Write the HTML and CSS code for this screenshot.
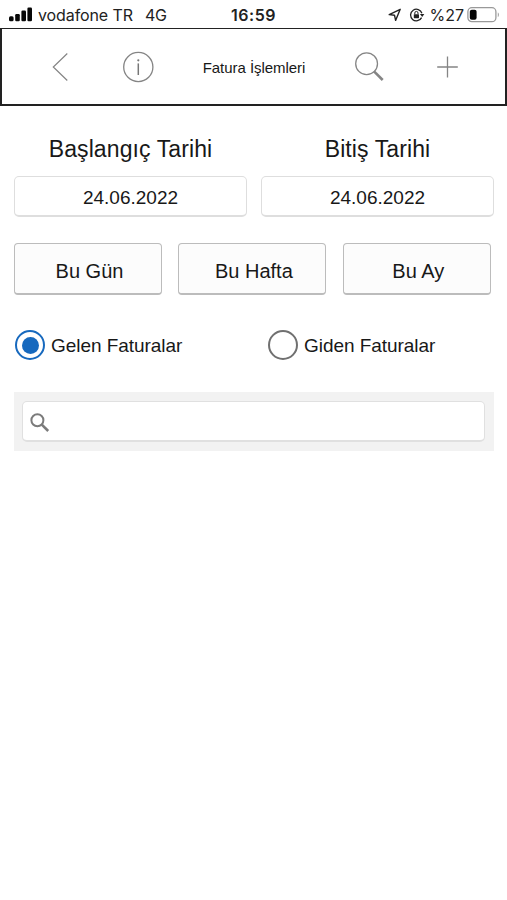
FILE: index.html
```html
<!DOCTYPE html>
<html lang="tr">
<head>
<meta charset="utf-8">
<title>Fatura İşlemleri</title>
<link rel="stylesheet" href="styles.css">
</head>
<body>
<div class="status">
  <div class="status-left">
    <svg width="24" height="16" viewBox="0 0 24 16"><g fill="#080808"><rect x="0" y="9.2" width="4.6" height="5" rx="1.5"/><rect x="6.2" y="7" width="4.6" height="7.2" rx="1.2"/><rect x="12.4" y="3.6" width="4.6" height="10.6" rx="1.2"/><rect x="18.4" y="0.5" width="4.6" height="13.7" rx="1.2"/></g></svg>
    <span class="carrier">vodafone TR</span><span class="network">4G</span>
  </div>
  <div class="clock">16:59</div>
  <div class="status-right">
    <svg class="location" width="14" height="14" viewBox="0 0 14 14"><path d="M12.2 1.3 1.2 6.6 6.5 7.2 7.6 12.4Z" fill="none" stroke="#222" stroke-width="1.4" stroke-linejoin="round"/></svg>
    <svg class="lock" width="16" height="14" viewBox="0 0 16 14"><path d="M12.6 9.6A5.8 5.8 0 1 1 12.9 5.2" fill="none" stroke="#222" stroke-width="1.3"/><path d="M10.9 5.9h4.4l-2.1 3z" fill="#222"/><rect x="4.8" y="6.2" width="5.2" height="4" rx=".6" fill="#222"/><path d="M5.8 6.3V5a1.6 1.6 0 0 1 3.2 0v1.3" fill="none" stroke="#222" stroke-width="1"/></svg>
    <span class="percent">%27</span>
    <svg class="battery" width="33" height="16" viewBox="0 0 33 16"><rect x=".9" y=".7" width="28" height="14" rx="4" fill="none" stroke="#999" stroke-width="1.3"/><rect x="2.8" y="2.7" width="6.8" height="10" rx="2" fill="#050505"/><path d="M30.8 5.5c1.4.4 1.4 4.2 0 4.6z" fill="#999"/></svg>
  </div>
</div>
<header class="toolbar">
  <svg class="tool" width="32" height="32" viewBox="0 0 32 32"><path d="M23.3 2.5 9.3 16 23.3 29.5" fill="none" stroke="#858585" stroke-width="1.2"/></svg>
  <svg class="tool" width="32" height="32" viewBox="0 0 32 32"><circle cx="16.3" cy="16" r="14.6" fill="none" stroke="#858585" stroke-width="1.3"/><path d="M16.3 12.4V24" stroke="#777" stroke-width="1.5"/><circle cx="16.3" cy="9.3" r="1.1" fill="#777"/></svg>
  <h1 class="title">Fatura İşlemleri</h1>
  <svg class="tool" width="32" height="32" viewBox="0 0 32 32"><circle cx="13.6" cy="12.7" r="10.9" fill="none" stroke="#858585" stroke-width="1.3"/><path d="M21 20.3 29.7 29" stroke="#858585" stroke-width="2.6"/></svg>
  <svg class="tool" width="32" height="32" viewBox="0 0 32 32"><path d="M16.5 5.5V26.5M6.2 16H26.8" stroke="#858585" stroke-width="1.3"/></svg>
</header>
<main>
  <section class="dates">
    <div class="field"><span class="label">Başlangıç Tarihi</span><div class="date">24.06.2022</div></div>
    <div class="field"><span class="label">Bitiş Tarihi</span><div class="date">24.06.2022</div></div>
  </section>
  <section class="ranges">
    <button>Bu Gün</button>
    <button>Bu Hafta</button>
    <button>Bu Ay</button>
  </section>
  <section class="types">
    <div class="type"><span class="radio checked"></span><span class="type-name">Gelen Faturalar</span></div>
    <div class="type"><span class="radio"></span><span class="type-name">Giden Faturalar</span></div>
  </section>
  <section class="filter">
    <div class="search"><svg width="20" height="20" viewBox="0 0 20 20"><circle cx="7.4" cy="7.2" r="6" fill="none" stroke="#7b7b7b" stroke-width="2"/><path d="M11.8 11.6 18.2 18" stroke="#7b7b7b" stroke-width="2.6"/></svg></div>
  </section>
</main>
</body>
</html>
```
FILE: styles.css
```css
* { box-sizing: border-box; }
body {
  margin: 0;
  min-height: 900px;
  background: #fff;
  color: #181818;
  font-family: "Liberation Sans", Arial, sans-serif;
}
svg { display: block; flex: none; }
.status {
  display: grid;
  grid-template-columns: 1fr 60px 1fr;
  align-items: center;
  height: 28px;
  padding: 1px 7px 0 9px;
  font: 16px/26px Inter, sans-serif;
  color: #222;
}
.status-left, .status-right { display: flex; align-items: center; white-space: nowrap; }
.status-right { justify-content: flex-end; }
.carrier { margin-left: 5px; letter-spacing: -.1px; }
.network { margin-left: 12px; letter-spacing: -.2px; }
.clock { margin-left: -2px; font-weight: 600; text-align: center; letter-spacing: .5px; }
.lock { margin-left: 7px; }
.percent { margin-left: 4px; }
.battery { margin-left: 3px; }
.toolbar {
  display: grid;
  grid-template-columns: 78px 78px 154px 76px 80px;
  justify-content: center;
  align-items: center;
  justify-items: center;
  height: 78px;
  padding-left: 1px;
  border: 2px solid #222;
  border-width: 1px 2px 2px;
}
.title { margin: 2px 0 0; font-size: 15px; font-weight: 400; line-height: 20px; letter-spacing: -.05px; white-space: nowrap; }
main { padding: 27px 13px 0 14px; }
.dates { display: grid; grid-template-columns: 233px 233px; gap: 14px; }
.label { display: block; height: 43px; line-height: 32px; font-size: 23px; letter-spacing: .1px; text-align: center; }
.date {
  height: 41px;
  border: 1px solid #dedede;
  border-bottom-width: 2px;
  border-radius: 5px;
  font-size: 19px;
  line-height: 41px;
  text-align: center;
}
.ranges { display: grid; grid-template-columns: repeat(3, 148px); gap: 16.4px; margin-top: 26px; }
.ranges button {
  height: 52px;
  padding: 5px 0 0 3px;
  border: 1.5px solid #bcbcbc;
  border-bottom-width: 2px;
  border-radius: 4px;
  background: #fcfcfc;
  color: inherit;
  font: 20px "Liberation Sans", Arial, sans-serif;
}
.types { display: grid; grid-template-columns: 253px 1fr; margin-top: 34px; padding-left: 1.4px; }
.type { display: flex; align-items: center; gap: 5.6px; height: 32px; font-size: 19px; }
.type-name { padding-top: 2px; letter-spacing: -.05px; }
.radio { width: 30px; height: 30px; border: 2px solid #707070; border-radius: 50%; }
.radio.checked { padding: 4.5px; border-color: #1769be; background: #1769be content-box; }
.filter { margin-top: 31px; height: 59px; width: 480px; padding: 9px 9px 9px 8px; background: #f2f2f2; }
.search {
  height: 41px;
  padding: 11px 0 0 7px;
  border: 1px solid #e0e0e0;
  border-bottom-width: 2px;
  border-radius: 5px;
  background: #fff;
}
```
